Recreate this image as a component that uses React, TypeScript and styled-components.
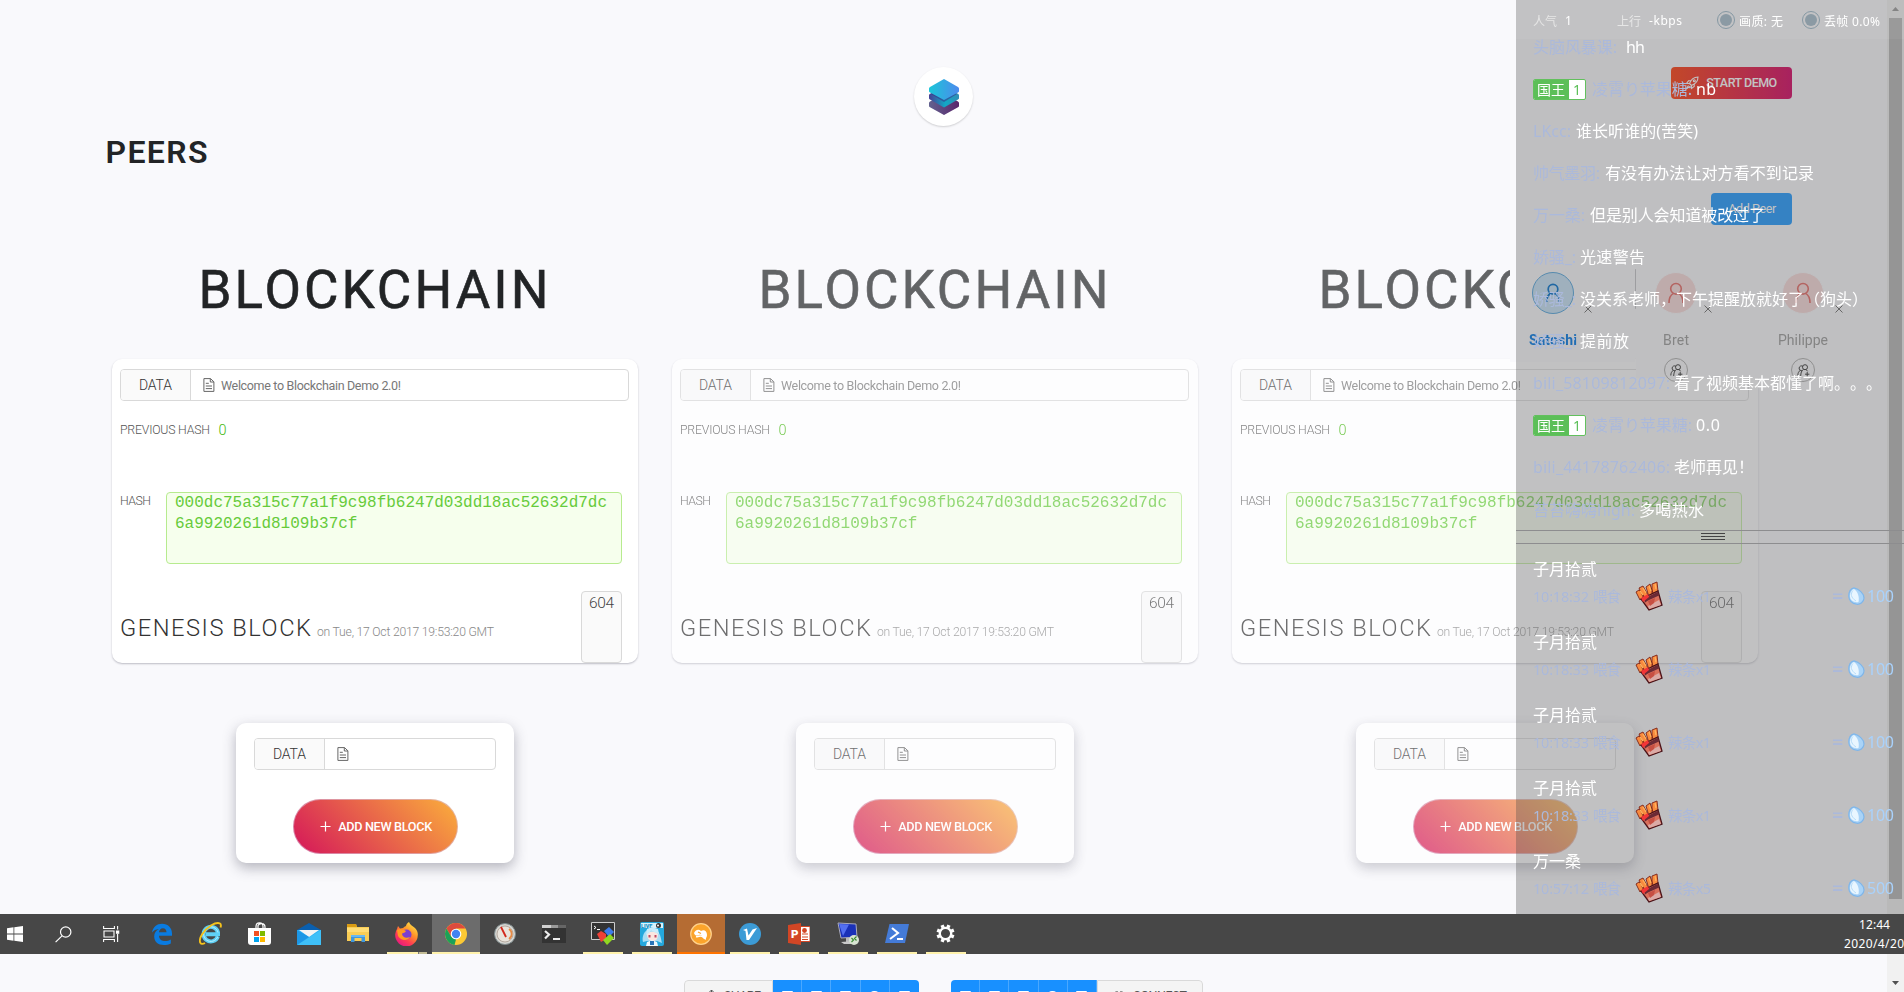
import React, { useLayoutEffect, useRef, useState } from "react";
import styled, { createGlobalStyle, css } from "styled-components";

const GlobalStyle = createGlobalStyle`
  * { box-sizing: border-box; }
  html, body { margin: 0; padding: 0; background: #f9f9fc; overflow: hidden; }
  body { font-family: Roboto, "Liberation Sans", sans-serif; color: #222426; text-spacing-trim: space-all; }
  h1, h2, h3 { margin: 0; font-weight: inherit; }
  svg { display: block; flex: none; }
`;

/* Text tracked so that it fills a given measure */
const Measure = styled.span<{ $w: number }>`
  display: inline-block;
  width: ${(p) => p.$w}px;
  white-space: pre;
  flex: none;
`;

function Fit({ w, children }: { w: number; children: string }) {
  const ref = useRef<HTMLSpanElement>(null);
  const [tracking, setTracking] = useState(0);
  useLayoutEffect(() => {
    const natural = ref.current!.getBoundingClientRect().width;
    const gaps = Math.max(1, Array.from(children).length - 1);
    setTracking((w - natural) / gaps);
  }, []);
  return (
    <Measure $w={w}>
      <span ref={ref} style={{ letterSpacing: tracking }}>
        {children}
      </span>
    </Measure>
  );
}

const Page = styled.div`
  position: relative;
  width: 1904px;
  height: 992px;
  overflow: hidden;
  display: flex;
  flex-direction: column;
  background: #f9f9fc;
`;

/* ---------- header ---------- */
const Header = styled.header`
  height: 252px;
  flex: none;
  display: grid;
  grid-template-columns: 914px 59px 1fr;
`;
const PageTitle = styled.h1`
  padding: 132px 0 0 105.5px;
  font-size: 32px;
  line-height: 40px;
  font-weight: 600;
`;
const LogoDisc = styled.div`
  width: 59px;
  height: 59px;
  margin-top: 67px;
  border-radius: 50%;
  background: #fff;
  box-shadow: 0 1px 2px rgba(0, 0, 0, 0.17);
  display: flex;
  align-items: center;
  justify-content: center;
`;
const Actions = styled.div`
  display: flex;
  flex-direction: column;
  align-items: flex-end;
  gap: 94px;
  padding: 67px 112px 0 0;
`;
const DemoButton = styled.button`
  width: 121px;
  height: 32px;
  border: 0;
  border-radius: 4px;
  padding: 0 0 1px 14px;
  display: flex;
  align-items: center;
  gap: 7px;
  color: #fff;
  font: 500 12.5px Roboto, sans-serif;
  background: linear-gradient(90deg, #ff4a1c, #d7126c);
`;
const PeerButton = styled(DemoButton)`
  width: 81px;
  padding-left: 17px;
  font-weight: 400;
  background: #2e9fff;
`;

/* ---------- boards ---------- */
const Boards = styled.main`
  flex: none;
  height: 728px;
  padding-left: 112px;
  display: grid;
  grid-template-columns: repeat(3, 526px);
  column-gap: 34px;
`;
const Board = styled.section<{ $dim?: boolean }>`
  opacity: ${(p) => (p.$dim ? 0.7 : 1)};
  display: flex;
  flex-direction: column;
  align-items: center;
`;
const BoardTitle = styled.h2`
  margin-top: 8px;
  margin-left: -3px;
  height: 99px;
  font-size: 53px;
  line-height: 60px;
  color: #222426;
  font-weight: 400;
  -webkit-text-stroke: 0.6px #222426;
`;
const BlockCard = styled.article`
  width: 526px;
  height: 304px;
  padding: 10px 9px 0 8px;
  border-radius: 10px;
  background: #fff;
  box-shadow: 0 1px 2px rgba(60, 60, 80, 0.32);
`;
const InputGroup = styled.div`
  height: 32px;
  display: flex;
  border: 1px solid #d9d9d9;
  border-radius: 4px;
  overflow: hidden;
`;
const Addon = styled.div`
  width: 70px;
  background: #fafafa;
  border-right: 1px solid #d9d9d9;
  padding-left: 18px;
  font-size: 14px;
  line-height: 31px;
  font-weight: 300;
  color: #333;
`;
const Field = styled.div`
  flex: 1;
  display: flex;
  align-items: center;
  gap: 6px;
  padding-left: 12px;
  font-size: 12.5px;
  color: #777;
`;
const Line = styled.div`
  display: flex;
  align-items: flex-start;
`;
const PreviousLine = styled(Line)`
  height: 91px;
  padding-top: 20px;
  line-height: 18px;
`;
const HashLine = styled(Line)`
  height: 99px;
  line-height: 18px;
`;
const Label = styled.span<{ $slot: number }>`
  width: ${(p) => p.$slot}px;
  font-size: 12.3px;
  font-weight: 300;
  color: #555;
`;
const Zero = styled.span`
  padding-top: 1px;
  font-size: 14.5px;
  font-weight: 300;
  color: #45b810;
`;
const HashBox = styled.div`
  width: 456px;
  height: 72px;
  border: 1px solid #b7eb8f;
  border-radius: 4px;
  background: #f6ffed;
  padding: 0 8px;
  color: #66cb3a;
  font: 16px/21px "Liberation Mono", monospace;
  overflow-wrap: anywhere;
`;
const Foot = styled.div`
  display: flex;
  height: 72px;
`;
const FootTitle = styled.h3`
  width: 197px;
  padding-top: 22px;
  font-size: 23.7px;
  line-height: 30px;
  font-weight: 300;
  color: #333;
`;
const Stamp = styled.span`
  width: 264px;
  padding-top: 32px;
  font-size: 12.2px;
  line-height: 18px;
  font-weight: 300;
  color: #888;
`;
const Nonce = styled.div`
  width: 41px;
  height: 72px;
  border: 1px solid #d9d9d9;
  border-radius: 4px;
  background: #fafafa;
  padding: 1px 0 0 7px;
  font-size: 15.5px;
  line-height: 21px;
  font-weight: 300;
  color: #444;
`;
const NewCard = styled.article`
  width: 278px;
  height: 140px;
  margin-top: 60px;
  padding: 15px 18px 0;
  border-radius: 10px;
  background: #fff;
  box-shadow: 0 5px 13px rgba(50, 50, 70, 0.34);
  display: flex;
  flex-direction: column;
`;
const AddButton = styled.button`
  width: 165px;
  height: 55px;
  margin: 29px 0 0 39px;
  border: 1px solid rgba(217, 190, 217, 0.6);
  border-radius: 28px;
  padding: 0 0 0 26px;
  display: flex;
  align-items: center;
  gap: 7px;
  color: #fff;
  font: 500 12.7px Roboto, sans-serif;
  background: linear-gradient(45deg, #d4145a, #fbb03b) border-box;
`;

/* ---------- peers ---------- */
const PeerBar = styled.nav`
  position: absolute;
  left: 1510px;
  top: 266px;
  display: flex;
  align-items: flex-start;
`;
const Peer = styled.div<{ $w: number; $h: number; $pad: number }>`
  width: ${(p) => p.$w}px;
  height: ${(p) => p.$h}px;
  padding-left: ${(p) => p.$pad}px;
  background: #f9f9fc;
`;
const PeerDivider = styled.div`
  width: 1px;
  height: 38px;
  margin-top: 4px;
  background: #c8c8cc;
`;
const PeerFace = styled.div`
  display: flex;
  align-items: flex-end;
  height: 48px;
`;
const Avatar = styled.div<{ $on?: boolean }>`
  width: 42px;
  height: 42px;
  border-radius: 50%;
  display: flex;
  align-items: center;
  justify-content: center;
  ${(p) =>
    p.$on
      ? css`background: #cbe4f6; border: 1px solid #5fabe0; color: #0f78d0;`
      : css`background: #f8dcdc; border: 1px solid #f9f9fc; color: #e8736f;`}
`;
const Remove = styled.div<{ $gap: number }>`
  margin-left: ${(p) => p.$gap}px;
  margin-bottom: 1px;
  color: #777;
`;
const PeerName = styled.div<{ $on?: boolean; $shift: number }>`
  margin: 16px 0 12px ${(p) => p.$shift}px;
  font-size: 14px;
  line-height: 20px;
  font-weight: ${(p) => (p.$on ? 700 : 400)};
  color: ${(p) => (p.$on ? "#1080e8" : "#a2a2a2")};
`;
const Connect = styled.div`
  width: 24px;
  height: 24px;
  margin: -4px 0 0 9px;
  border: 1px solid #b4b4b4;
  border-radius: 50%;
  display: flex;
  align-items: center;
  justify-content: center;
  color: #444;
`;

/* ---------- scrollbar ---------- */
const Scrollbar = styled.div`
  position: absolute;
  right: 0;
  top: 0;
  width: 17px;
  height: 992px;
  background: #f1f1f1;
  display: flex;
  flex-direction: column;
  align-items: center;
  justify-content: space-between;
  padding: 7px 0;
`;
const Thumb = styled.div`
  width: 13px;
  height: 881px;
  margin-bottom: 75px;
  background: #bbb;
`;

/* ---------- live chat ---------- */
const Live = styled.aside`
  position: absolute;
  left: 1516px;
  top: 0;
  width: 388px;
  height: 914px;
  background: rgba(69, 69, 69, 0.32);
  color: #fff;
  font-family: "Noto Sans", "Noto Sans CJK SC", sans-serif;
  display: flex;
  flex-direction: column;
`;
const LiveHead = styled.div`
  height: 39px;
  flex: none;
  padding: 2px 0 0 17px;
  display: flex;
  align-items: center;
  background: rgba(255, 255, 255, 0.05);
  font-size: 12px;
`;
const Stat = styled.div<{ $slot: number; $soft?: boolean }>`
  width: ${(p) => p.$slot}px;
  color: ${(p) => (p.$soft ? "#e6e6e6" : "#fff")};
`;
const Lamp = styled.span`
  width: 18px;
  height: 18px;
  margin: 0 4px 2px 0;
  flex: none;
  border: 1px solid #8497a2;
  border-radius: 50%;
  padding: 2px;
  background: #8b9aa4 content-box;
  background-clip: content-box;
`;
const ChatList = styled.div`
  height: 491px;
  overflow: hidden;
  flex: none;
`;
const ChatRow = styled.div`
  height: 42.05px;
  display: flex;
  align-items: center;
  padding-left: 17px;
  font-size: 16px;
  line-height: 24px;
  position: relative;
  top: -13px;
`;
const ChatName = styled.span<{ $slot: number }>`
  width: ${(p) => p.$slot}px;
  flex: none;
  color: #abb9db;
`;
const Medal = styled.span`
  width: 53px;
  height: 21px;
  margin-right: 6px;
  flex: none;
  display: flex;
  border: 1px solid #62c05d;
  border-radius: 2px;
  background: #fff;
  font-size: 14px;
  line-height: 19px;
  overflow: hidden;
`;
const MedalName = styled.span`
  width: 35px;
  padding-left: 3px;
  background: #5cbf58;
`;
const MedalLevel = styled.span`
  width: 16px;
  text-align: center;
  color: #5cbf58;
`;
const DragBar = styled.div`
  height: 14px;
  flex: none;
  border-top: 1px solid #8d8d8f;
  border-bottom: 1px solid #8d8d8f;
  padding: 2px 0 0 185px;
`;
const Grip = styled.div`
  width: 24px;
  height: 7px;
  border-top: 1px solid #444;
  border-bottom: 1px solid #444;
  background: linear-gradient(#444, #444) 0 2px / 24px 1px no-repeat;
`;
const GiftList = styled.div`
  padding-top: 13px;
`;
const Gift = styled.div`
  height: 73.1px;
  padding-left: 17px;
  font-size: 16px;
  line-height: 24px;
`;
const GiftLine = styled.div`
  display: flex;
  align-items: center;
  height: 30px;
  color: #abb9db;
  font-size: 14.5px;
`;
const GiftSlot = styled.span<{ $w: number }>`
  width: ${(p) => p.$w}px;
  flex: none;
`;
const Equals = styled(GiftSlot)`
  font-size: 20px;
  font-weight: 500;
`;
const GiftValue = styled.span`
  padding-left: 2px;
  font-size: 16px;
  color: #a9d2fc;
`;

/* ---------- taskbar ---------- */
const Taskbar = styled.div`
  position: absolute;
  left: 0;
  top: 914px;
  width: 1904px;
  height: 40px;
  display: flex;
  background: #474747;
`;
const SysSlot = styled.div<{ $w: number }>`
  width: ${(p) => p.$w}px;
  height: 40px;
  display: flex;
  align-items: center;
`;
const AppSlot = styled.div`
  width: 49px;
  height: 40px;
  display: flex;
  justify-content: center;
`;
const AppTile = styled.div<{ $state: string }>`
  width: ${(p) => (p.$state === "active" || p.$state === "alert" ? 48 : 40)}px;
  height: 40px;
  display: flex;
  align-items: center;
  justify-content: center;
  border-bottom: 2px solid transparent;
  padding-top: 1px;
  ${(p) => p.$state === "open" && css`border-bottom-color: #fff2ac;`}
  ${(p) => p.$state === "stacked" && css`border-bottom: 0; padding-bottom: 2px; background: linear-gradient(90deg, #fff2ac 31px, #777 31px, #777 32px, #c4bd96 32px) 0 100% / 100% 2px no-repeat;`}
  ${(p) => p.$state === "active" && css`background: #6c6c6c; border-bottom-color: #fff2ac;`}
  ${(p) => p.$state === "alert" && css`background: #b56c33; border-bottom-color: #ff7300;`}
`;
const Clock = styled.div`
  margin-left: auto;
  width: 60px;
  padding-top: 1px;
  display: flex;
  flex-direction: column;
  color: #fff;
  font: 12px/19px "Noto Sans", sans-serif;
`;
const Time = styled.div`
  padding-left: 15px;
`;

/* ---------- footer ---------- */
const Footer = styled.footer`
  height: 12px;
  flex: none;
  padding-left: 684px;
  display: flex;
  gap: 32px;
  overflow: hidden;
`;
const ShareGroup = styled.div`
  display: flex;
  height: 32px;
  border-radius: 4px;
  overflow: hidden;
`;
const ShareLabel = styled.div<{ $w: number; $right?: boolean }>`
  width: ${(p) => p.$w}px;
  border: 1px solid #d9d9d9;
  border-radius: ${(p) => (p.$right ? "0 4px 4px 0" : "4px 0 0 4px")};
  background: #f4f4f4;
  color: #555;
  font-size: 12.5px;
  line-height: 30px;
  display: flex;
  gap: 8px;
  padding: 0 0 0 ${(p) => (p.$right ? 15 : 22)}px;
  align-items: center;
`;
const ShareButton = styled.div`
  width: 29.2px;
  background: #1890ff;
  border-right: 1px solid #4aa8ff;
  display: flex;
  align-items: center;
  justify-content: center;
  &:last-child { border-right: 0; }
`;

/* ---------- icons ---------- */
const FileIcon = () => (
  <svg width="12" height="14" viewBox="0 0 12 14" fill="none" stroke="#666" strokeWidth="1">
    <path d="M.9.6h6.6l3.4 3.2v9.6H.9zM7.3.6v3.4h3.6M2.8 5.3h3M2.8 8h6.2M2.8 10.6h6.2" />
  </svg>
);
const PlusIcon = () => (
  <svg width="11" height="11" viewBox="0 0 11 11" stroke="#fff" strokeWidth="1.2">
    <path d="M5.5.5v10M.5 5.5h10" />
  </svg>
);
const UserIcon = ({ size = 22, strong = false }: { size?: number; strong?: boolean }) => (
  <svg width={size} height={size} viewBox="0 0 22 22" fill="none" stroke="currentColor" strokeWidth={strong ? 1.9 : 1.6}>
    <circle cx="11" cy="6.8" r="5.3" />
    <path d="M8.5 11.4C5.5 13 4 16 4 21M13.5 11.4c3 1.6 4.5 4.6 4.5 9.6" />
  </svg>
);
const CrossIcon = () => (
  <svg width="8" height="8" viewBox="0 0 8 8" stroke="currentColor" strokeWidth="1">
    <path d="M.5.5l7 7M7.5.5l-7 7" />
  </svg>
);
const ConnectIcon = () => (
  <svg width="13" height="13" viewBox="0 0 13 13" fill="none" stroke="currentColor" strokeWidth="1">
    <circle cx="8" cy="3.2" r="2.500" />
    <path d="M5.400 6.500a2.400 2.400 0 11.5-4.200M3.200 6.300C1.600 7.500.9 9 .8 11.500M6.300 5.400C4.500 6.800 3.800 9 3.700 12M9.200 5.500l1.300 1.800M8 10.200h4.400M10.200 8v4.400" />
  </svg>
);
const RocketIcon = () => (
  <svg width="14" height="14" viewBox="0 0 14 14" fill="none" stroke="#fff" strokeWidth="1.1">
    <path d="M4.5 7.5C6 3.5 9 1 13 1c0 4-2.500 7-6.500 8.500zM4.500 7.500H1.500L3.500 4.800h2.600M6.500 9.500v3L9.200 10.500V8M3.500 9.500l-2.500 3.500 3.500-2.300" />
    <circle cx="9.300" cy="4.700" r="1" />
  </svg>
);
const StackLogo = () => (
  <svg width="30" height="36" viewBox="0 0 30 36">
    <defs>
      <linearGradient id="stA" x1="0" x2="1"><stop offset="0" stopColor="#1bc6d8" /><stop offset="1" stopColor="#4d8aed" /></linearGradient>
      <linearGradient id="stB" x1="0" x2="1"><stop offset="0" stopColor="#463f93" /><stop offset=".55" stopColor="#12a8c6" /><stop offset="1" stopColor="#328db5" /></linearGradient>
      <linearGradient id="stC" x1="0" x2="1"><stop offset="0" stopColor="#63628f" /><stop offset="1" stopColor="#59256b" /></linearGradient>
    </defs>
    <path d="M15 15L1 22.500Q0 23 0 24v3q0 .8 1 1.300L15 36l14-7.700q1-.5 1-1.300v-3q0-1-1-1.500z" fill="url(#stC)" />
    <path d="M15 8L1 14.800Q0 15.300 0 16.300v3q0 .8 1 1.300l14 7.900 14-7.900q1-.5 1-1.300v-3q0-1-1-1.500z" fill="url(#stB)" />
    <path d="M2 15l13 8 13-8-4-2H6z" fill="#3a2f86" opacity=".55" />
    <path d="M15 0L1 8Q0 8.500 0 9.500v2.800q0 .8 1 1.300L15 21l14-7.400q1-.5 1-1.300V9.500q0-1-1-1.500z" fill="url(#stA)" />
  </svg>
);
const FriesIcon = () => (
  <svg width="28" height="30" viewBox="0 0 28 30" strokeLinejoin="miter">
    <g fill="#f98a3e" stroke="#7c2418" strokeWidth=".9">
      <path d="M1 11l3-2 5 6-4 4zM4 7l4-2 5 9-4 4zM11 6l4-3 3 9-4 4zM17 3l5-2 1 9-6 3z" />
    </g>
    <path d="M5 10l3 4M8 7l3 5M14 5l2 5M20 3l1 5" stroke="#ffb25c" strokeWidth="1.300" />
    <path d="M6 18l17-8 4 14-13 5z" fill="#d9705c" stroke="#4b141a" strokeWidth="1.300" />
    <path d="M9 18l14-7.500 1 4-11 5-3 2z" fill="#6b2a35" />
    <path d="M6 17l7-4 1 3-6 5z" fill="#f23537" />
    <path d="M13 25l11-6 2 5-12 4z" fill="#dbaaa6" />
    <path d="M13 20l7-3-1 5-4 3z" fill="#c74f43" />
  </svg>
);
const DropIcon = () => (
  <svg width="17" height="18" viewBox="0 0 17 18">
    <path d="M6 .8c5 1.200 10 5.500 10 10.200a6.500 6.500 0 01-7.500 6.200C3.500 16.800.8 13 .8 9 .8 5 2.800 1.500 6 .8z" fill="#a9d3f7" stroke="#7fb6ea" strokeWidth="1.200" />
    <path d="M6 2c4 3 5.500 8 4.500 13C6 16 2 13 2 9c0-3 1.500-6 4-7z" fill="#e9f6ff" />
    <path d="M5 3.500c-2.500 3-2.500 7 3 10.500" stroke="#b7dcf8" fill="none" />
  </svg>
);

const WindowsIcon = () => (
  <svg width="16" height="16" viewBox="0 0 16 16" fill="#fff"><path d="M0 2.200l6.500-.9v6.300H0zM7.300 1.200L16 0v7.600H7.300zM0 8.400h6.500v6.300L0 13.800zM7.300 8.400H16V16l-8.700-1.200z" /></svg>
);
const SearchIcon = () => (
  <svg width="17" height="17" viewBox="0 0 17 17" fill="none" stroke="#fff" strokeWidth="1.200"><circle cx="10.700" cy="6" r="5.200" /><path d="M7 9.800L.6 16.200" /></svg>
);
const TaskViewIcon = () => (
  <svg width="17" height="16" viewBox="0 0 17 16" fill="none" stroke="#fff" strokeWidth="1.100"><path d="M.6 0v2.500h10.800V0M.6 16v-2.500h10.800V16M1 5h10v6H1zM14.600 0v3.500M14.600 8v8" /><path d="M13.500 5h2.200v2.200h-2.200z" fill="#fff" /></svg>
);
const EdgeIcon = () => (
  <svg width="22" height="22" viewBox="0 0 22 22"><path d="M1 9.500C2 4 6 .8 11 .8c6 0 10 4 10 9.700v2.200H8c.2 4 3.200 5.300 6 5.300 2.200 0 4.200-.6 5.800-1.600v4c-2 1.100-4.300 1.600-7 1.600C7 22 3.200 18.500 3.200 13.500c0-3.500 1.800-6 4.800-7.500-3 .3-5.500 1.500-7 3.500zM8 9.300h7.500c0-2.300-1.200-4-3.600-4C9.700 5.300 8.200 7 8 9.300z" fill="#0a7be0" /></svg>
);
const IeIcon = () => (
  <svg width="23" height="23" viewBox="0 0 23 23" fill="none">
    <path d="M18.800 14.500A7.300 7.300 0 1119 10.500v1.700H7" stroke="#5fd0f5" strokeWidth="4" />
    <path d="M18.800 14.500A7.300 7.300 0 1119 10.500" stroke="#b8efff" strokeWidth="1" />
    <path d="M6 21C1 24-1 19 3 12.500 8 4.500 17-.5 21 1.500c1.200.8 1 2.500.5 4" stroke="#f4c21c" strokeWidth="1.900" />
  </svg>
);
const StoreIcon = () => (
  <svg width="23" height="23" viewBox="0 0 23 23"><path d="M8 7V4.500C8 1 11 .8 11.500.8S15 1 15 4.500V7M10 7V3.500C11 1 17 .5 17 5v2" stroke="#fff" strokeWidth="1.200" fill="none" /><path d="M0 6h23v14a3 3 0 01-3 3H3a3 3 0 01-3-3z" fill="#fff" /><path d="M6 9h5v5H6z" fill="#f25022" /><path d="M12 9h5v5h-5z" fill="#7fba00" /><path d="M6 15h5v5H6z" fill="#00a4ef" /><path d="M12 15h5v5h-5z" fill="#ffb900" /></svg>
);
const MailIcon = () => (
  <svg width="24" height="22" viewBox="0 0 24 22"><path d="M0 7L12 0l12 7z" fill="#0a5fae" /><path d="M0 7h24v15H0z" fill="#2fb1f3" /><path d="M0 22L24 7v15z" fill="#3fc0f8" /><path d="M2 7h20l-10 7z" fill="#f3f3f3" /><path d="M0 7v15l12-8z" fill="#1c97e6" /></svg>
);
const FolderIcon = () => (
  <svg width="22" height="19" viewBox="0 0 22 19"><path d="M0 0h9l1 3h12v14H0z" fill="#f9cd55" /><path d="M0 0h9l1 3H0z" fill="#d99b13" /><path d="M0 4h22v4H0z" fill="#ffdc74" /><path d="M4 18v-7h14v7h-3.500v-4h-7v4z" fill="#3f97dd" /><path d="M4 11h14v2H4z" fill="#68b8f0" /></svg>
);
const FirefoxIcon = () => (
  <svg width="23" height="24" viewBox="0 0 23 24">
    <defs><linearGradient id="fx" x1="0.900" y1="0" x2="0.200" y2="1"><stop offset="0" stopColor="#fff44f" /><stop offset=".4" stopColor="#ff9428" /><stop offset=".7" stopColor="#ff3b54" /><stop offset="1" stopColor="#e31587" /></linearGradient></defs>
    <path d="M14 0c1 3 4 4 6 6 2 2 3 4.500 2.800 7A11.300 11.300 0 11 2 7l1-3 2 2.500L8 6c1-1 2-1.500 3-2 0-1.500 1.500-3 3-4z" fill="url(#fx)" />
    <circle cx="11.500" cy="12.500" r="5" fill="#7a3fd0" /><path d="M2 8c3-2 6-1 9 1-1 2-3 2-4 2.500C7 15 11 17 15 15c-2 4-9 4-12-1z" fill="#ff9a22" />
  </svg>
);
const ChromeIcon = () => (
  <svg width="22" height="22" viewBox="0 0 22 22"><circle cx="11" cy="11" r="11" fill="#fcc934" /><path d="M1.500 5.500A11 11 0 0120.500 5.500H11L6.200 13.800z" fill="#dd4b3e" /><path d="M1.500 5.500l4.700 8.200L11 16.500l-1.500 5.400A11 11 0 011.500 5.500z" fill="#1ba158" /><circle cx="11" cy="11" r="5.300" fill="#fff" /><circle cx="11" cy="11" r="4.200" fill="#4283f2" /></svg>
);
const GaugeIcon = () => (
  <svg width="22" height="22" viewBox="0 0 22 22"><circle cx="11" cy="11" r="10.500" fill="#d6d6d2" stroke="#7e8b8d" /><circle cx="11" cy="11" r="8" fill="#e9e4dc" stroke="#b5aaa0" /><path d="M7 4l5 10" stroke="#d2281c" strokeWidth="1.800" /><path d="M15 6a6 6 0 010 10" stroke="#e68a45" strokeWidth="1.800" fill="none" /></svg>
);
const TerminalIcon = () => (
  <svg width="24" height="18" viewBox="0 0 24 18"><path d="M0 0h24v18H0z" fill="#333" /><path d="M0 0h9v3H0z" fill="#d0d0d0" /><path d="M9 0h7v3H9z" fill="#9a9a9a" /><path d="M16 0h8v3h-8z" fill="#666" /><path d="M3 6l4 3.500L3 13.500M11 14h7" stroke="#eee" strokeWidth="2.200" fill="none" /></svg>
);
const CmderIcon = () => (
  <svg width="24" height="23" viewBox="0 0 24 23"><path d="M.5.5h23v17H.5z" fill="#333" stroke="#ccc" /><path d="M3 4l2 1.500L3 7M6 7.500h3" stroke="#fff" fill="none" /><path d="M6 12l4-3 5 3v5l-5 3z" fill="#ee4036" /><path d="M13 9l5-4 5 5-5 5z" fill="#3e7cea" /><path d="M12 18l7-6 4 4-7 7z" fill="#91d721" /></svg>
);
const LiveIcon = () => (
  <svg width="24" height="24" viewBox="0 0 24 24"><rect width="24" height="24" rx="2" fill="#24a8dd" /><path d="M1 1h22v5H1z" fill="#d8f2fb" /><text x="1" y="5.500" fontSize="5.500" fontWeight="900" fontFamily="Roboto" fill="#168ec4">LIVE</text><circle cx="18.500" cy="3.500" r="2.500" fill="#333" /><circle cx="18" cy="3.500" r="1" fill="#fff" /><path d="M3 20c-1-4 0-9 4-12 4-2 10-1 12 3 2 3 2 7 3 10l-5-2H7z" fill="#a8def5" /><path d="M7 12c2-3 8-3 11 0 0 5-2 7-5 7s-6-2-6-7z" fill="#fbe6e0" /><path d="M6 13c2-1 4-3 5-5 2 2 4 2 8 4l-1-5-6-2-5 2z" fill="#c8edfb" /><path d="M8.500 13h2v2.500h-2zM14.500 13h2v2.500h-2z" fill="#c04a62" /><path d="M7 20l5-2 5 2 1 4H6z" fill="#eef8fc" /><path d="M10 19h4v4h-4z" fill="#2874b8" /></svg>
);
const ShellIcon = () => (
  <svg width="22" height="22" viewBox="0 0 22 22"><circle cx="11" cy="11" r="10.300" fill="#fba42b" stroke="#ffd28c" strokeWidth="1.200" /><path d="M4 10c2-4 5-4 7-2 3-2 6 0 6 4 0 2-1 3-2 4-3 0-2-5-6-4-2 1-4 1-5-2z" fill="#fff" /><path d="M6 13.500c3 1 4-2 7 .5 1 1 1.500 2 3 2" stroke="#fff" strokeWidth="1.500" fill="none" /><path d="M8 9l3 1.500" stroke="#fba42b" strokeWidth="1.200" fill="none" /></svg>
);
const VIcon = () => (
  <svg width="22" height="22" viewBox="0 0 22 22"><circle cx="11" cy="11" r="11" fill="#3c9bd6" /><path d="M4 7l4-1.500 1.500 7 4-6L18 5 10 17H7.500L6.500 8z" fill="#fff" /></svg>
);
const SlidesIcon = () => (
  <svg width="22" height="22" viewBox="0 0 22 22"><path d="M12 3.500h10v15H12z" fill="#fff" stroke="#d24625" /><path d="M14 11h6M14 14h6M14 16.500h6" stroke="#d24625" /><circle cx="16.500" cy="7.500" r="2.400" fill="#d24625" /><path d="M0 2l13-2v22L0 20z" fill="#d24625" /><text x="3" y="15" fontSize="11.500" fontWeight="900" fontFamily="Roboto" fill="#fff">P</text></svg>
);
const RemoteIcon = () => (
  <svg width="22" height="24" viewBox="0 0 22 24"><path d="M1 1l18 1 1 13-16 1z" fill="#1a31b8" stroke="#aab" /><path d="M2 2l10 .5L6 14z" fill="#536ff0" /><path d="M9 16h5l1 4H9z" fill="#bbb" /><path d="M4 20l13-1 3 3H7z" fill="#c9c9c9" /><circle cx="17" cy="18" r="5" fill="#d8e4d2" /><path d="M14.500 16l2 2-2 2M19.500 14.500l-2 2 2 2" stroke="#3c8c35" fill="none" strokeWidth="1.200" /></svg>
);
const PowerShellIcon = () => (
  <svg width="24" height="19" viewBox="0 0 24 19"><path d="M4.500 0H24l-4 19H0z" fill="#447bd8" /><path d="M7 4l6 5-8 6M12 15h6" stroke="#fff" strokeWidth="2.100" fill="none" /></svg>
);
const GearIcon = () => (
  <svg width="19" height="19" viewBox="-9.500 -9.500 19 19"><circle r="5.700" fill="none" stroke="#fff" strokeWidth="2.300" />{[0, 45, 90, 135, 180, 225, 270, 315].map((a) => <path key={a} d="M-1.700-9h3.400v3h-3.400z" fill="#fff" transform={`rotate(${a + 22.5})`} />)}</svg>
);

/* ---------- data ---------- */
const chat: { medal?: boolean; name: string; nw: number; slot: number; text: string; tw: number }[] = [
  { name: "头脑风暴课:", nw: 84, slot: 93, text: "hh", tw: 19 },
  { medal: true, name: "凌霄り苹果糖:", nw: 100, slot: 104, text: "nb", tw: 20 },
  { name: "LKcc:", nw: 38, slot: 43, text: "谁长听谁的(苦笑)", tw: 122 },
  { name: "帅气墨羽:", nw: 67, slot: 72, text: "有没有办法让对方看不到记录", tw: 209 },
  { name: "万一桑:", nw: 52, slot: 57, text: "但是别人会知道被改过了", tw: 175 },
  { name: "娇骚_:", nw: 43, slot: 47, text: "光速警告", tw: 65 },
  { name: "娇骚_:", nw: 43, slot: 47, text: "没关系老师，下午提醒放就好了（狗头）", tw: 288 },
  { name: "娇骚_:", nw: 43, slot: 47, text: "提前放", tw: 49 },
  { name: "bili_58109812097:", nw: 137, slot: 141, text: "看了视频基本都懂了啊。。。", tw: 208 },
  { medal: true, name: "凌霄り苹果糖:", nw: 100, slot: 104, text: "0.0", tw: 24 },
  { name: "bili_44178762406:", nw: 137, slot: 141, text: "老师再见！", tw: 80 },
  { name: "苔苔嗨嗨high:", nw: 102, slot: 106, text: "多喝热水", tw: 65 },
];
const gifts = [
  { who: "子月拾贰", time: "10:18:32", n: 1, value: "100" },
  { who: "子月拾贰", time: "10:18:33", n: 1, value: "100" },
  { who: "子月拾贰", time: "10:18:33", n: 1, value: "100" },
  { who: "子月拾贰", time: "10:18:33", n: 1, value: "100" },
  { who: "万一桑", time: "10:57:12", n: 5, value: "500" },
];
const apps: [React.FC, string][] = [
  [EdgeIcon, "idle"], [IeIcon, "idle"], [StoreIcon, "idle"], [MailIcon, "idle"], [FolderIcon, "idle"],
  [FirefoxIcon, "stacked"], [ChromeIcon, "active"], [GaugeIcon, "idle"], [TerminalIcon, "idle"],
  [CmderIcon, "open"], [LiveIcon, "open"], [ShellIcon, "alert"], [VIcon, "open"], [SlidesIcon, "open"],
  [RemoteIcon, "open"], [PowerShellIcon, "open"], [GearIcon, "open"],
];
const hash = "000dc75a315c77a1f9c98fb6247d03dd18ac52632d7dc6a9920261d8109b37cf";

const BlockBoard = ({ dim }: { dim?: boolean }) => (
  <Board $dim={dim}>
    <BoardTitle><Fit w={350}>BLOCKCHAIN</Fit></BoardTitle>
    <BlockCard>
      <InputGroup>
        <Addon><Fit w={33}>DATA</Fit></Addon>
        <Field><FileIcon /><Fit w={180}>Welcome to Blockchain Demo 2.0!</Fit></Field>
      </InputGroup>
      <PreviousLine>
        <Label $slot={98.5}><Fit w={90}>PREVIOUS HASH</Fit></Label>
        <Zero>0</Zero>
      </PreviousLine>
      <HashLine>
        <Label $slot={46}><Fit w={31}>HASH</Fit></Label>
        <HashBox>{hash}</HashBox>
      </HashLine>
      <Foot>
        <FootTitle><Fit w={191}>GENESIS BLOCK</Fit></FootTitle>
        <Stamp><Fit w={177}>on Tue, 17 Oct 2017 19:53:20 GMT</Fit></Stamp>
        <Nonce><Fit w={25}>604</Fit></Nonce>
      </Foot>
    </BlockCard>
    <NewCard>
      <InputGroup>
        <Addon><Fit w={33}>DATA</Fit></Addon>
        <Field><FileIcon /></Field>
      </InputGroup>
      <AddButton><PlusIcon /><Fit w={94}>ADD NEW BLOCK</Fit></AddButton>
    </NewCard>
  </Board>
);

const ShareIcons = () => (
  <>
    {[0, 1, 2, 3, 4].map((i) => (
      <ShareButton key={i}>
        <svg width="11" height="10" viewBox="0 0 11 10" fill="#fff"><rect width="11" height="10" rx={i === 3 ? 5 : 1} /></svg>
      </ShareButton>
    ))}
  </>
);

export default function App() {
  return (
    <Page>
      <GlobalStyle />
      <Header>
        <PageTitle><Fit w={102}>PEERS</Fit></PageTitle>
        <LogoDisc><StackLogo /></LogoDisc>
        <Actions>
          <DemoButton><RocketIcon /><Fit w={71}>START DEMO</Fit></DemoButton>
          <PeerButton><Fit w={48}>Add Peer</Fit></PeerButton>
        </Actions>
      </Header>
      <Boards>
        <BlockBoard />
        <BlockBoard dim />
        <BlockBoard dim />
      </Boards>
      <Footer>
        <ShareGroup>
          <ShareLabel $w={89}>
            <svg width="9" height="12" viewBox="0 0 9 12" fill="none" stroke="#555"><path d="M4.500 0v8M1.500 3l3-3 3 3M.5 6v5.500h8V6" /></svg>
            <Fit w={37}>SHARE</Fit>
          </ShareLabel>
          <ShareIcons />
        </ShareGroup>
        <ShareGroup>
          <ShareIcons />
          <ShareLabel $w={106} $right>
            <svg width="12" height="11" viewBox="0 0 12 11" fill="none" stroke="#555"><path d="M6 10.500L1 5.500C-.5 2 4-1 6 2c2-3 6.500 0 5 3.500z" /></svg>
            <Fit w={54}>CONNECT</Fit>
          </ShareLabel>
        </ShareGroup>
      </Footer>

      <PeerBar>
        <Peer $w={125} $h={96} $pad={22}>
          <PeerFace><Avatar $on><UserIcon size={20} strong /></Avatar><Remove $gap={10}><CrossIcon /></Remove></PeerFace>
          <PeerName $on $shift={-3}><Fit w={48}>Satoshi</Fit></PeerName>
        </Peer>
        <PeerDivider />
        <Peer $w={120} $h={112} $pad={19}>
          <PeerFace><Avatar><UserIcon /></Avatar><Remove $gap={7}><CrossIcon /></Remove></PeerFace>
          <PeerName $shift={8}><Fit w={26}>Bret</Fit></PeerName>
          <Connect><ConnectIcon /></Connect>
        </Peer>
        <Peer $w={110} $h={112} $pad={26}>
          <PeerFace><Avatar><UserIcon /></Avatar><Remove $gap={11}><CrossIcon /></Remove></PeerFace>
          <PeerName $shift={-4}><Fit w={50}>Philippe</Fit></PeerName>
          <Connect><ConnectIcon /></Connect>
        </Peer>
      </PeerBar>

      <Scrollbar>
        <svg width="7" height="4" viewBox="0 0 7 4"><path d="M0 4l3.500-4L7 4z" fill="#999" /></svg>
        <Thumb />
        <svg width="7" height="4" viewBox="0 0 7 4"><path d="M0 0l3.500 4L7 0z" fill="#505050" /></svg>
      </Scrollbar>

      <Live>
        <LiveHead>
          <Stat $slot={32} $soft>人气</Stat>
          <Stat $slot={52}>1</Stat>
          <Stat $slot={32} $soft>上行</Stat>
          <Stat $slot={68}><Fit w={33}>-kbps</Fit></Stat>
          <Lamp /><Stat $slot={63}><Fit w={44}>画质: 无</Fit></Stat>
          <Lamp /><Stat $slot={58}><Fit w={56}>丢帧 0.0%</Fit></Stat>
        </LiveHead>
        <ChatList>
          {chat.map((c, i) => (
            <ChatRow key={i}>
              {c.medal && <Medal><MedalName>国王</MedalName><MedalLevel>1</MedalLevel></Medal>}
              <ChatName $slot={c.slot}><Fit w={c.nw}>{c.name}</Fit></ChatName>
              <Fit w={c.tw}>{c.text}</Fit>
            </ChatRow>
          ))}
        </ChatList>
        <DragBar><Grip /></DragBar>
        <GiftList>
          {gifts.map((g, i) => (
            <Gift key={i}>
              {g.who}
              <GiftLine>
                <GiftSlot $w={60}><Fit w={56}>{g.time}</Fit></GiftSlot>
                <GiftSlot $w={42}><Fit w={28}>喂食</Fit></GiftSlot>
                <FriesIcon />
                <GiftSlot $w={5} />
                <GiftSlot $w={164}><Fit w={43}>{`辣条x${g.n}`}</Fit></GiftSlot>
                <Equals $w={16}>=</Equals>
                <DropIcon />
                <GiftValue><Fit w={27}>{g.value}</Fit></GiftValue>
              </GiftLine>
            </Gift>
          ))}
        </GiftList>
      </Live>

      <Taskbar>
        <SysSlot $w={55}><GiftSlot $w={7} /><WindowsIcon /></SysSlot>
        <SysSlot $w={48}><SearchIcon /></SysSlot>
        <SysSlot $w={34}><TaskViewIcon /></SysSlot>
        {apps.map(([Icon, state], i) => (
          <AppSlot key={i}><AppTile $state={state}><Icon /></AppTile></AppSlot>
        ))}
        <Clock><Time><Fit w={31}>12:44</Fit></Time><Fit w={60}>2020/4/20</Fit></Clock>
      </Taskbar>
    </Page>
  );
}
